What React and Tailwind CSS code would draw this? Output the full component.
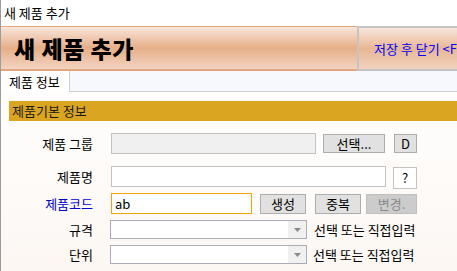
import React from 'react';

const font = { fontFamily: '"Noto Sans CJK KR", "Noto Sans", sans-serif' };

function Btn({ children, className = '' }) {
    return (
        <div className={`flex items-center justify-center bg-[#e1e1e1] border border-[#adadad] text-[13px] text-black leading-none ${className}`}>
            {children}
        </div>
    );
}

function Combo() {
    return (
        <div className="flex w-[197px] h-[19px] bg-white border border-[#a9aeb6]">
            <div className="flex-1" />
            <div className="w-[18px] bg-[#f0f0f0] flex items-center justify-center">
                <svg width="7" height="4" viewBox="0 0 7 4">
                    <path d="M0 0h7L3.5 4z" fill="#8a8a8a" />
                </svg>
            </div>
        </div>
    );
}

export default function App() {
    return (
        <div className="w-[457px] h-[271px] overflow-hidden bg-white border-l border-[#9c9c9c] flex flex-col" style={font}>
            {/* window title */}
            <div className="h-[26px] shrink-0 flex items-center pl-[3px] text-[13px] text-black">새 제품 추가</div>

            {/* header */}
            <div className="h-[45px] shrink-0 flex">
                <div className="flex-1 flex items-center pl-[13px] border-t border-b-2 border-[#e2a57d] bg-[linear-gradient(#f9e6dc,#e6ae88_50%,#f2d3c0)]">
                    <span className="text-[23px] font-black text-black tracking-[0.5px]">새 제품 추가</span>
                </div>
                <div className="w-[100px] overflow-hidden flex items-center pl-[15px] border-l-2 border-t-2 border-b-2 border-[#c4c4c4] bg-[linear-gradient(#f9e6dc,#e8b794_50%,#f2d3c0)] whitespace-nowrap">
                    <span className="text-[13px] text-[#0000ff]">저장 후 닫기 &lt;F</span>
                </div>
            </div>

            {/* tabs */}
            <div className="h-[21px] shrink-0 flex bg-[#f7f8fd] border-b border-[#cfcfcf]">
                <div className="w-[69px] -mb-px bg-white border-r border-[#cfcfcf] flex items-center pl-[8px] text-[13px] text-black">제품 정보</div>
            </div>

            {/* content */}
            <div className="flex-1 pt-[9px] pl-[8px] bg-[linear-gradient(#fffefd,#fcf7f3)]">
                <div className="h-[20px] bg-[#daa520] flex items-center pl-[3px] text-[13px] text-[#1a1a1a]">제품기본 정보</div>

                <div className="mt-[12px] h-[21px] flex items-center">
                    <div className="w-[84px] text-right text-[13px] text-black">제품 그룹</div>
                    <div className="ml-[18px] w-[205px] h-[21px] bg-[#f0f0f0] border border-[#c2c2c2]" />
                    <Btn className="ml-[7px] w-[62px] h-[19px]">선택...</Btn>
                    <Btn className="ml-[9px] w-[23px] h-[19px]">D</Btn>
                </div>

                <div className="mt-[12px] h-[21px] flex items-center">
                    <div className="w-[84px] text-right text-[13px] text-black">제품명</div>
                    <div className="ml-[18px] w-[275px] h-[21px] bg-white border border-[#c2c2c2]" />
                    <div className="ml-[7px] w-[24px] h-[22px] mt-[2px] flex items-center justify-center bg-white border border-[#c2c2c2] text-[13px] text-black">?</div>
                </div>

                <div className="mt-[6px] h-[21px] flex items-center">
                    <div className="w-[84px] text-right text-[13px] text-[#0000cc]">제품코드</div>
                    <div className="ml-[18px] w-[141px] h-[21px] bg-white border border-[#f5a200] flex items-center pl-[3px] text-[13px] text-black">ab</div>
                    <Btn className="ml-[8px] w-[46px] h-[20px]">생성</Btn>
                    <Btn className="ml-[9px] w-[46px] h-[20px]">중복</Btn>
                    <div className="ml-[5px] w-[51px] h-[20px] flex items-center justify-center bg-[#cccccc] border border-[#bfbfbf] text-[13px] text-[#8a8a8a]">변경.</div>
                </div>

                <div className="mt-[6px] h-[19px] flex items-center">
                    <div className="w-[84px] text-right text-[13px] text-black">규격</div>
                    <div className="ml-[17px]"><Combo /></div>
                    <div className="ml-[7px] text-[13px] text-black whitespace-nowrap">선택 또는 직접입력</div>
                </div>

                <div className="mt-[6px] h-[19px] flex items-center">
                    <div className="w-[84px] text-right text-[13px] text-black">단위</div>
                    <div className="ml-[17px]"><Combo /></div>
                    <div className="ml-[6px] text-[13px] text-black whitespace-nowrap">선택 또는 직접입력</div>
                </div>
            </div>
        </div>
    );
}
